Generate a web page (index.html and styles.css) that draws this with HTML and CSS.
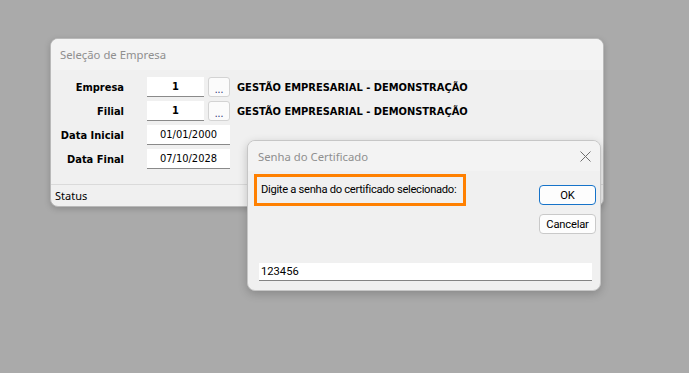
FILE: index.html
```html
<!DOCTYPE html>
<html lang="pt-BR">
<head>
  <meta charset="UTF-8" />
  <meta name="viewport" content="width=device-width, initial-scale=1.0"/>
  <title>Seleção de Empresa</title>
  <link rel="stylesheet" href="styles.css">
</head>
<body>
  <div class="desktop">
    <div class="window main-window">
      <div class="title-bar">Seleção de Empresa</div>
      <div class="form">
        <div class="row">
          <span class="label">Empresa</span>
          <div class="field code">1</div>
          <button class="lookup">...</button>
          <span class="desc">GESTÃO EMPRESARIAL - DEMONSTRAÇÃO</span>
        </div>
        <div class="row">
          <span class="label">Filial</span>
          <div class="field code">1</div>
          <button class="lookup">...</button>
          <span class="desc">GESTÃO EMPRESARIAL - DEMONSTRAÇÃO</span>
        </div>
        <div class="row">
          <span class="label">Data Inicial</span>
          <div class="field date">01/01/2000</div>
        </div>
        <div class="row">
          <span class="label">Data Final</span>
          <div class="field date">07/10/2028</div>
        </div>
      </div>
      <div class="status">Status</div>
    </div>

    <div class="window cert-dialog">
      <div class="title-bar">
        <span>Senha do Certificado</span>
        <svg class="close" width="11" height="11" viewBox="0 0 11 11">
          <path d="M0.5 0.5 L10.5 10.5 M10.5 0.5 L0.5 10.5" stroke="#6e6e6e" stroke-width="1" fill="none"/>
        </svg>
      </div>
      <div class="dialog-body">
        <div class="top">
          <div class="message">Digite a senha do certificado selecionado:</div>
          <div class="actions">
            <button class="btn primary">OK</button>
            <button class="btn">Cancelar</button>
          </div>
        </div>
        <div class="password">123456</div>
      </div>
    </div>
  </div>
</body>
</html>
```

FILE: styles.css
```css
* {
  box-sizing: border-box;
}
body {
  margin: 0;
  height: 100vh;
  background: #aaaaaa;
  overflow: hidden;
}
.desktop {
  position: relative;
  height: 100%;
  padding: 38px 0 0 50px;
}
.window {
  display: flex;
  flex-direction: column;
  background: #f0f0f0;
  border: 1px solid #b9b9b9;
  border-radius: 8px;
  box-shadow: 0 2px 6px rgba(0, 0, 0, 0.18);
  overflow: hidden;
}
.title-bar {
  display: flex;
  align-items: center;
  background: #f3f3f3;
  padding-left: 9px;
  font-family: "Noto Sans", sans-serif;
  font-size: 11.3px;
  color: #8f8f8f;
}

/* main window */
.main-window {
  width: 554px;
  height: 169px;
  font-family: "DejaVu Sans Condensed", "DejaVu Sans", sans-serif;
  font-stretch: condensed;
  font-size: 11px;
  color: #000;
}
.main-window .title-bar {
  height: 31px;
}
.form {
  flex: 1;
  display: flex;
  flex-direction: column;
  gap: 4px;
  padding-top: 7px;
}
.row {
  display: flex;
  align-items: center;
  height: 20px;
}
.label {
  width: 73px;
  margin-right: 23px;
  text-align: right;
  font-weight: bold;
}
.field {
  width: 57px;
  height: 20px;
  line-height: 19px;
  background: #fff;
  border-bottom: 1px solid #8a8a8a;
  text-align: center;
}
.field.code {
  font-weight: bold;
}
.field.date {
  width: 83px;
}
.lookup {
  width: 22px;
  height: 20px;
  margin-left: 4px;
  padding: 6px 0 0;
  border: 1px solid #d3d3d3;
  border-radius: 3px;
  background: #fbfbfb;
  font-family: inherit;
  font-size: 10px;
  line-height: 10px;
  color: #1a1a6e;
}
.desc {
  margin-left: 7px;
  font-weight: bold;
}
.status {
  height: 22px;
  line-height: 21px;
  padding-left: 4px;
  border-top: 1px solid #dadada;
  font-family: "Noto Sans", sans-serif;
  font-stretch: normal;
  font-size: 11px;
}

/* certificate password dialog */
.cert-dialog {
  position: absolute;
  left: 247px;
  top: 140px;
  width: 354px;
  height: 151px;
  border-color: #c6c6c6;
  box-shadow: 0 3px 10px rgba(0, 0, 0, 0.2);
  font-family: Roboto, "Liberation Sans", sans-serif;
  font-size: 11.2px;
  color: #000;
}
.cert-dialog .title-bar {
  height: 30px;
  padding-left: 10px;
  justify-content: space-between;
}
.close {
  margin-right: 9px;
}
.dialog-body {
  flex: 1;
  display: flex;
  flex-direction: column;
  padding: 3px 4px 9px 6px;
}
.top {
  display: flex;
  align-items: flex-start;
}
.message {
  width: 212px;
  height: 32px;
  padding-left: 4px;
  border: 3px solid #ff8000;
  line-height: 25px;
  letter-spacing: -0.3px;
  white-space: nowrap;
}
.actions {
  display: flex;
  flex-direction: column;
  gap: 9px;
  margin: 11px 0 0 auto;
}
.btn {
  width: 57px;
  height: 20px;
  padding: 0;
  border: 1px solid #c9c9c9;
  border-radius: 4px;
  background: #fdfdfd;
  font-family: inherit;
  font-size: 11.2px;
  letter-spacing: -0.2px;
  color: #000;
}
.btn.primary {
  border-color: #1673c9;
}
.password {
  height: 18px;
  margin: auto 4px 0 5px;
  padding-left: 2px;
  background: #fff;
  border-bottom: 1px solid #848484;
  line-height: 18px;
}
```
